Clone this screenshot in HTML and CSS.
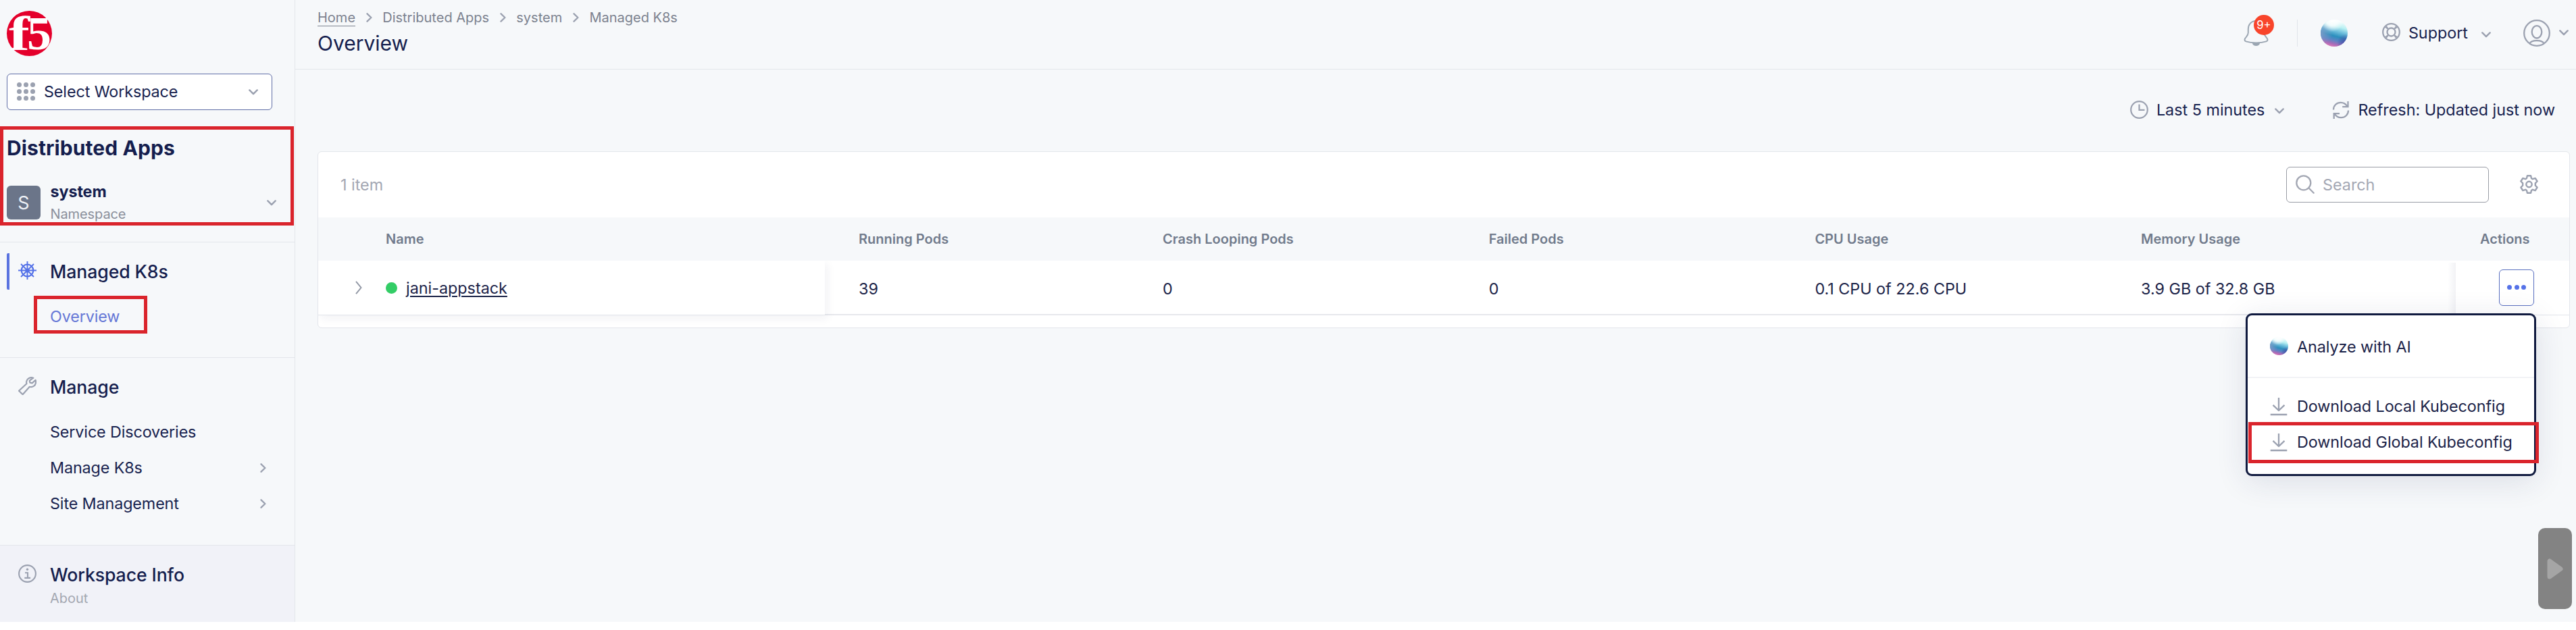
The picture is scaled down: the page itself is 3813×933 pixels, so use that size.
FILE: index.html
```
<!DOCTYPE html>
<html lang="en">
<head>
<meta charset="utf-8">
<title>Overview - Managed K8s</title>
<link rel="stylesheet" href="styles.css">
</head>
<body>
<svg class="defs" width="0" height="0" aria-hidden="true">
  <defs>
    <linearGradient id="orb" x1="0.66" y1="0" x2="0.38" y2="1">
      <stop offset="0" stop-color="#ffffff"/>
      <stop offset="0.25" stop-color="#b9f0f2"/>
      <stop offset="0.42" stop-color="#6fbfdc"/>
      <stop offset="0.6" stop-color="#2b8fbd"/>
      <stop offset="0.75" stop-color="#5c84c4"/>
      <stop offset="0.88" stop-color="#a56cb8"/>
      <stop offset="1" stop-color="#e078b8"/>
    </linearGradient>
    <radialGradient id="orb-top" cx="0.42" cy="0" r="0.45">
      <stop offset="0" stop-color="#fff" stop-opacity="1"/>
      <stop offset="0.5" stop-color="#fff" stop-opacity="0.8"/>
      <stop offset="1" stop-color="#fff" stop-opacity="0"/>
    </radialGradient>
    <radialGradient id="orb-left" cx="0" cy="0.5" r="0.45">
      <stop offset="0" stop-color="#7f9cc8" stop-opacity="0.9"/>
      <stop offset="1" stop-color="#7f9cc8" stop-opacity="0"/>
    </radialGradient>
    <radialGradient id="orb-right" cx="0.92" cy="0.85" r="0.32">
      <stop offset="0" stop-color="#4b3fa0" stop-opacity="0.8"/>
      <stop offset="1" stop-color="#4b3fa0" stop-opacity="0"/>
    </radialGradient>
    <symbol id="ai" viewBox="0 0 40 40">
      <circle cx="20" cy="20" r="20" fill="url(#orb)"/>
      <circle cx="20" cy="20" r="20" fill="url(#orb-left)"/>
      <circle cx="20" cy="20" r="20" fill="url(#orb-right)"/>
      <circle cx="20" cy="20" r="20" fill="url(#orb-top)"/>
    </symbol>
    <symbol id="down" viewBox="0 0 14 9"><path d="M1.3 1.4 7 7.2l5.7-5.8" fill="none" stroke="currentColor" stroke-width="2.4" stroke-linecap="round" stroke-linejoin="round"/></symbol>
    <symbol id="right" viewBox="0 0 9 14"><path d="M1.5 1.3 7.4 7l-5.9 5.7" fill="none" stroke="currentColor" stroke-width="2.3" stroke-linecap="round" stroke-linejoin="round"/></symbol>
    <symbol id="download" viewBox="0 0 26 28"><path d="M13 1v19M4.5 11.8 13 20l8.500-8.200M.7 26h24.600" fill="none" stroke="currentColor" stroke-width="2.3" stroke-linejoin="round"/></symbol>
  </defs>
</svg>
<div class="app">
  <aside class="sidebar">
    <div class="brand">
      <svg class="logo" viewBox="0 0 67 67">
        <circle cx="33.500" cy="33.500" r="33.500" fill="#e4002b"/>
        <g fill="#fff" font-family="'Liberation Serif', serif" font-weight="700">
          <text x="3" y="57.500" font-size="72" textLength="31" lengthAdjust="spacingAndGlyphs">f</text>
          <text x="30" y="57" font-size="69" textLength="36" lengthAdjust="spacingAndGlyphs">5</text>
        </g>
      </svg>
    </div>
    <div class="workspace-select">
      <svg class="dots-grid" viewBox="0 0 27 27" fill="#9ba1b0"><circle cx="3.500" cy="3.500" r="3.500"/><circle cx="13.500" cy="3.500" r="3.500"/><circle cx="23.500" cy="3.500" r="3.500"/><circle cx="3.500" cy="13.500" r="3.500"/><circle cx="13.500" cy="13.500" r="3.500"/><circle cx="23.500" cy="13.500" r="3.500"/><circle cx="3.500" cy="23.500" r="3.500"/><circle cx="13.500" cy="23.500" r="3.500"/><circle cx="23.500" cy="23.500" r="3.500"/></svg>
      <span class="select-label">Select Workspace</span>
      <svg class="chev-down"><use href="#down"/></svg>
    </div>
    <h2 class="app-title">Distributed Apps</h2>
    <div class="namespace">
      <span class="tile">S</span>
      <span class="ns-text"><b class="ns-name">system</b><span class="ns-kind">Namespace</span></span>
      <svg class="chev-down"><use href="#down"/></svg>
    </div>
    <div class="mark mark-app"></div>

    <section class="group group-k8s">
      <div class="group-head active">
        <svg class="g-icon blue" viewBox="0 0 27 27" fill="none" stroke="currentColor" stroke-width="2.200"><circle cx="13.500" cy="13.500" r="8.800"/><circle cx="13.500" cy="13.500" r="2"/><path d="M13.500 0v27M0 13.500h27M4 4l19 19M23 4 4 23" stroke-width="1.900"/></svg>
        <span>Managed K8s</span>
      </div>
      <a class="item current">Overview</a>
      <div class="mark mark-overview"></div>
    </section>
    <section class="group group-manage">
      <div class="group-head">
        <svg class="g-icon" viewBox="0 0 27 27" fill="none" stroke="currentColor" stroke-width="2.200" stroke-linejoin="round"><path d="M22.300 1.700C17.800.2 13.300 2.600 12.300 6.600c-.4 1.600-.2 2.600.1 3.600L1 20.800l5.600 5.400L16.800 14.800c4.500 1 8.600-1.400 9.200-6 .2-1.500 0-2.800-.4-3.900l-5 4.400-3.200-.6-.6-3z"/></svg>
        <span>Manage</span>
      </div>
      <a class="item">Service Discoveries</a>
      <a class="item">Manage K8s<svg class="chev-right"><use href="#right"/></svg></a>
      <a class="item">Site Management<svg class="chev-right"><use href="#right"/></svg></a>
    </section>
    <section class="group group-info">
      <div class="group-head">
        <svg class="g-icon" viewBox="0 0 27 27" fill="none" stroke="currentColor" stroke-width="2.100"><circle cx="13.500" cy="13.500" r="12.400"/><circle cx="13.500" cy="7.300" r="1.700" fill="currentColor" stroke="none"/><path d="M10 12.200h4v7.600M9.300 19.900h8.800"/></svg>
        <span>Workspace Info</span>
      </div>
      <span class="about">About</span>
    </section>
  </aside>

  <main class="main">
    <header class="topbar">
      <div class="heading">
        <nav class="crumbs">
          <a class="home">Home</a><svg class="chev-right"><use href="#right"/></svg><span>Distributed Apps</span><svg class="chev-right"><use href="#right"/></svg><span>system</span><svg class="chev-right"><use href="#right"/></svg><span>Managed K8s</span>
        </nav>
        <h1 class="page-title">Overview</h1>
      </div>
      <div class="tools">
        <div class="bell">
          <svg viewBox="0 0 37 38" fill="none" stroke="#9ba6b2" stroke-width="2"><path d="M18.500 1C11 1 6.800 6.500 6.800 13v5.500c0 3-1.300 4.500-3.200 6.600C.8 28 .8 30.500 3.500 31.400c8.500 2.700 21.500 2.700 30 0 2.700-.9 2.700-3.400-.1-6.300-1.900-2.100-3.200-3.600-3.200-6.600V13C30.200 6.500 26 1 18.500 1z"/><path d="M14 34.200c1 3.600 8 3.600 9 0z" fill="#9ba6b2"/></svg>
          <span class="badge">9+</span>
        </div>
        <span class="divider"></span>
        <svg class="ai-large"><use href="#ai"/></svg>
        <svg class="ring" viewBox="0 0 27 27" fill="none" stroke="currentColor" stroke-width="2.300"><circle cx="13.500" cy="13.500" r="12.300"/><circle cx="13.500" cy="13.500" r="6"/><path d="m4.200 5.800 4.700 3.400M5.800 4.200l3.400 4.700M22.800 5.800l-4.700 3.400M21.200 4.200l-3.400 4.700M4.200 21.200l4.700-3.400M5.800 22.800l3.400-4.700M22.800 21.200l-4.700-3.400M21.200 22.800l-3.400-4.700" stroke-width="1.600"/></svg>
        <span class="support">Support</span>
        <svg class="chev-down low"><use href="#down"/></svg>
        <svg class="avatar" viewBox="0 0 40 40" fill="none" stroke="currentColor" stroke-width="2.300"><circle cx="20" cy="20" r="18.800"/><ellipse cx="20" cy="18.300" rx="7.300" ry="9.200"/><path d="M9.500 35.500c1.500-3.600 5-4.400 10.500-4.400s9 .8 10.500 4.400"/></svg>
        <svg class="chev-down"><use href="#down"/></svg>
      </div>
    </header>

    <div class="refresh-bar">
      <svg class="clock" viewBox="0 0 27 27" fill="none" stroke="currentColor" stroke-width="2.200"><circle cx="13.500" cy="13.500" r="12.300"/><path d="M13.500 5.500v8.300h8"/></svg>
      <span>Last 5 minutes</span>
      <svg class="chev-down"><use href="#down"/></svg>
      <svg class="reload" viewBox="0 0 26 28" fill="none" stroke="currentColor" stroke-width="2.300"><path d="M2 13.500C2 7 7 2.800 12.600 2.800c4.200 0 7.600 1.900 9.800 5.700M23.500 1v8.200h-8.300M24 14.500c0 6.500-5 10.700-10.600 10.700-4.200 0-7.600-1.900-9.800-5.700M2.700 27v-7.800H11"/></svg>
      <span>Refresh: Updated just now</span>
    </div>

    <div class="card">
      <div class="card-top">
        <span class="count">1 item</span>
        <div class="search">
          <svg viewBox="0 0 28 28" fill="none" stroke="currentColor" stroke-width="2.300"><circle cx="11.800" cy="11.800" r="10.500"/><path d="m19.300 19.300 7.400 7.400" stroke-linecap="round"/></svg>
          <span>Search</span>
        </div>
        <svg class="gear" viewBox="0 0 27 28" fill="none" stroke="currentColor" stroke-width="2.400" stroke-linejoin="round"><circle cx="13.500" cy="14" r="4.200"/><path d="M10.900 1.200h5.200l.9 3.900 1.800 1.100 3.900-1.300 2.900 4.600-2.800 2.900v3.200l2.800 2.900-2.900 4.600-3.900-1.300-1.800 1.100-.9 3.900h-5.200l-.9-3.900-1.800-1.100-3.900 1.300-2.900-4.600 2.800-2.900v-3.200l-2.800-2.900 2.900-4.600 3.900 1.300L10 5.100z"/></svg>
      </div>
      <div class="row thead">
        <span class="name-col">Name</span><span>Running Pods</span><span>Crash Looping Pods</span><span>Failed Pods</span><span>CPU Usage</span><span>Memory Usage</span><span class="act-head">Actions</span>
      </div>
      <div class="row tbody">
        <div class="name-cell">
          <svg class="expand" viewBox="0 0 10 20" fill="none" stroke="currentColor" stroke-width="1.900"><path d="m1 .8 7.500 9.200L1 19.200"/></svg>
          <i class="status"></i>
          <a class="site">jani-appstack</a>
        </div>
        <span>39</span><span>0</span><span>0</span><span>0.1 CPU of 22.6 CPU</span><span>3.9 GB of 32.8 GB</span>
        <div class="act-cell">
          <button class="more"><i></i><i></i><i></i></button>
          <div class="menu">
            <a class="menu-item ai-item"><svg class="m-ai"><use href="#ai"/></svg>Analyze with AI</a>
            <div class="menu-group">
              <a class="menu-item"><svg class="m-dl"><use href="#download"/></svg>Download Local Kubeconfig</a>
              <a class="menu-item"><svg class="m-dl"><use href="#download"/></svg>Download Global Kubeconfig</a>
            </div>
            <div class="mark mark-global"></div>
          </div>
        </div>
      </div>
    </div>
    <div class="player"><svg viewBox="0 0 24 31"><path d="M4 4v23l16-11.500z" fill="#a5a5a5" stroke="#a5a5a5" stroke-width="7" stroke-linejoin="round"/></svg></div>
  </main>
</div>
</body>
</html>
```
FILE: styles.css
```
* { box-sizing: border-box; }
body {
  margin: 0;
  background: #fff;
  font-family: Inter, "Liberation Sans", sans-serif;
  font-size: 23.33px;
  line-height: 28px;
  color: #18234f;
}
svg { display: block; flex: none; }
.defs { position: absolute; }
h1, h2 { margin: 0; }
.app { display: flex; height: 921px; background: #f6f8fa; overflow: hidden; }
.chev-down { width: 14px; height: 9px; color: #9ba1b0; }
.chev-right { width: 9px; height: 14px; color: #9ba1b0; }
.mark { position: absolute; border: 5px solid #da242c; }

/* Sidebar */
.sidebar { position: relative; flex: none; width: 437px; border-right: 1px solid #e3e6eb; display: flex; flex-direction: column; }
.brand { padding: 16px 0 0 10px; }
.logo { width: 67px; height: 67px; overflow: visible; }
.workspace-select {
  display: flex; align-items: center; width: 393px; height: 54px;
  margin: 26px 0 0 10px; padding: 0 20px 0 14px;
  background: #fff; border: 1px solid #5f6da6; border-radius: 6px;
}
.dots-grid { width: 27px; height: 27px; margin-top: -1px; }
.select-label { flex: 1; margin-left: 13px; letter-spacing: -0.1px; }
.app-title { margin: 38px 0 0 10px; font-size: 30px; line-height: 36px; font-weight: 700; letter-spacing: 0.1px; color: #151e4e; }
.namespace { display: flex; height: 50px; margin: 38px 27px 0 10px; align-items: center; }
.tile { width: 50px; height: 50px; border-radius: 6px; background: #6b7589; color: #eef1f6; font-size: 27px; line-height: 52px; text-align: center; }
.ns-text { flex: 1; display: flex; flex-direction: column; gap: 7px; margin: -2px 0 0 14.5px; }
.ns-name { font-weight: 700; color: #151e4e; letter-spacing: -0.1px; }
.ns-kind { font-size: 20px; line-height: 24px; color: #8a8f9b; letter-spacing: -0.1px; }
.mark-app { left: 0; top: 187px; width: 435px; height: 147px; }
.group { position: relative; border-top: 1px solid #e3e6eb; padding-top: 16px; }
.group-k8s { margin-top: 33px; height: 171px; }
.group-manage { height: 278px; }
.group-info { height: 114px; background: #f1f2f8; }
.group-head { display: flex; align-items: center; height: 54px; margin-left: 10px; padding-left: 17px; gap: 20px; font-size: 26.67px; font-weight: 500; letter-spacing: -0.1px; color: #151e4e; }
.group-head.active { padding-left: 13px; border-left: 4px solid #5a73e0; border-radius: 2px; }
.g-icon { width: 27px; height: 27px; color: #9ba1b0; margin-top: -3px; }
.g-icon.blue { color: #5572e8; }
.item { display: flex; align-items: center; justify-content: space-between; height: 53.4px; padding: 0 42px 0 74px; letter-spacing: -0.12px; }
.group-head + .item { margin-top: 13px; }
.item.current { color: #6577d6; }
.mark-overview { left: 50px; top: 79px; width: 168px; height: 56px; }
.about { display: block; margin: -4px 0 0 74px; font-size: 20px; line-height: 24px; color: #a3a7b1; }

/* Header */
.main { position: relative; flex: 1; min-width: 0; }
.topbar { display: flex; justify-content: space-between; height: 103px; border-bottom: 1px solid #e3e6eb; }
.heading { padding: 14px 0 0 33px; }
.crumbs { display: flex; align-items: center; gap: 15.6px; font-size: 20px; line-height: 24px; color: #7c828f; }
.home { border-bottom: 1px solid #7c828f; margin-bottom: -1px; }
.page-title { margin-top: 8px; font-size: 30px; line-height: 36px; font-weight: 400; color: #151e4e; }
.tools { display: flex; align-items: center; height: 97px; padding-right: 11px; color: #9ba1b0; }
.bell { position: relative; width: 37px; height: 38px; }
.bell svg { width: 37px; height: 38px; }
.badge { position: absolute; left: 15px; top: -8px; width: 30px; height: 30px; border-radius: 50%; background: #f8452b; color: #fff; font-size: 16.7px; line-height: 30px; text-align: center; }
.divider { width: 1px; height: 40px; margin: 0 34px 0 42px; background: #e1e4ea; }
.ai-large { width: 40px; height: 40px; }
.ring { width: 27px; height: 27px; margin: -2px 12px 0 51px; }
.support { color: #18234f; margin-right: 20px; }
.low { margin-top: 5px; }
.avatar { width: 40px; height: 40px; margin: 0 13px 0 48px; }

.refresh-bar { display: flex; align-items: center; justify-content: flex-end; height: 121px; padding: 0 31px 2px 0; }
.clock { width: 27px; height: 27px; color: #9ba1b0; margin-right: 12px; }
.refresh-bar .chev-down { margin: 3px 71px 0 15px; }
.reload { width: 26px; height: 28px; color: #9ba1b0; margin-right: 12px; }

/* Table */
.card { width: 3334px; height: 262px; margin-left: 33px; background: #fff; border: 1px solid #e3e6eb; border-radius: 6px; }
.card-top { display: flex; align-items: center; height: 97px; padding: 0 46px 0 33px; }
.count { flex: 1; color: #a3a7b3; }
.search { display: flex; align-items: center; width: 300px; height: 53px; margin-right: 46px; padding-left: 13px; gap: 12px; border: 1px solid #9a9da6; border-radius: 6px; color: #a3a7b3; }
.search svg { width: 28px; height: 28px; margin-top: -2px; }
.gear { width: 27px; height: 28px; color: #9ba1b0; margin-top: -2px; }
.row { display: grid; grid-template-columns: 750px 450px 482.700px 482.700px 482.700px 1fr 168px; align-items: center; }
.row > span { padding-left: 50px; }
.thead { height: 64px; background: #f6f8fa; font-size: 20px; font-weight: 600; color: #717b8c; }
.row > .name-col { padding-left: 100px; }
.row > .act-head { padding-left: 36px; }
.tbody { height: 81px; border-bottom: 2px solid #e6e8ec; color: #1b2348; }
.tbody > span { padding-top: 2px; }
.name-cell { display: flex; align-items: center; height: 81px; background: #fff; padding-left: 55px; border-bottom: 1px solid #e1e4ea; box-shadow: 4px 5px 12px rgba(30, 40, 90, 0.06); clip-path: inset(0 -20px -20px 0); }
.expand { width: 10px; height: 20px; color: #8f95a3; }
.status { width: 17px; height: 17px; margin: 0 13px 0 35px; border-radius: 50%; background: #33cd66; }
.site { padding-top: 1px; text-decoration: underline; text-decoration-thickness: 2px; text-underline-offset: 3px; text-decoration-skip-ink: auto; }
.act-cell { position: relative; display: flex; align-items: center; justify-content: flex-end; height: 81px; padding-right: 52px; background: #fff; border-bottom: 1px solid #e1e4ea; }
.act-cell::before { content: ""; position: absolute; left: -12px; top: 3px; width: 12px; height: 76px; background: linear-gradient(to left, rgba(30, 40, 90, 0.06), transparent); }
.more { display: flex; align-items: center; justify-content: center; gap: 3.300px; width: 52px; height: 54px; padding: 0 0 2px; border: 1px solid #5a70c0; border-radius: 6px; background: #fff; }
.more i { width: 7px; height: 7px; border-radius: 50%; background: #5572e8; }
.menu {
  position: absolute; right: 49px; top: 78px; width: 430px; height: 241px;
  background: #fff; border: 3px solid #101a3f; border-radius: 9px;
  box-shadow: 0 8px 46px rgba(30, 40, 90, 0.12);
  letter-spacing: -0.06px;
}
.menu-item { display: flex; align-items: center; height: 53px; padding-left: 33px; gap: 13px; white-space: nowrap; }
.ai-item { height: 91px; padding-top: 3px; }
.m-ai { width: 27px; height: 27px; margin-top: -3px; }
.menu-group { border-top: 2px solid #f2f3f6; padding-top: 15px; }
.m-dl { width: 26px; height: 28px; margin: 0 1px 0 0; color: #9ba1b0; }
.mark-global { left: 1px; top: 158px; width: 430px; height: 61px; }
.player { position: absolute; right: 6px; top: 782px; width: 50px; height: 120px; border-radius: 10px; background: #838383; display: flex; align-items: center; justify-content: center; }
.player svg { width: 24px; height: 31px; }
```
